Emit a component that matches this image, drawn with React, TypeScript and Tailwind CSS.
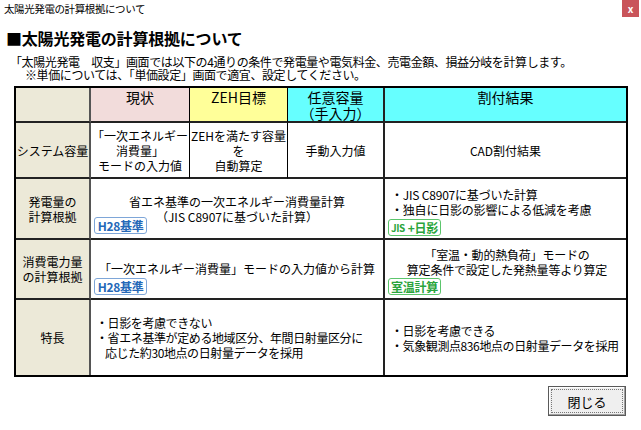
import React from "react";

const F = "font-['Noto_Sans_CJK_JP','Noto_Sans',sans-serif]";

function Badge({ children, color }: { children: React.ReactNode; color: "blue" | "green" }) {
  const cls =
    color === "blue"
      ? "text-[#2468b8] border-[#7ea6d8]"
      : "text-[#2aa43c] border-[#5cc56c]";
  return (
    <span
      className={`inline-flex items-center justify-center whitespace-nowrap h-[17px] w-[53px] rounded-[3px] border bg-white text-[12px] leading-[15px] font-bold tracking-[-0.3px] ${cls}`}
    >
      {children}
    </span>
  );
}

export default function App() {
  const beige = "bg-[#ece9d8]";
  return (
    <div className={`w-[641px] h-[430px] bg-white text-black overflow-hidden ${F}`}>
      {/* title bar */}
      <div className="h-[20px] flex justify-between">
        <div className="pl-[4px] pt-[2px] text-[10.5px] leading-[14px] tracking-[-0.4px]">
          太陽光発電の計算根拠について
        </div>
        <div className="w-[17px] h-[17px] mr-[2px] bg-[#c9545a] flex items-center justify-center text-white text-[10px] font-bold leading-none">
          x
        </div>
      </div>

      {/* heading */}
      <div className="mt-[8px] pl-[6px] text-[16px] leading-[20px] font-bold tracking-[-0.2px]">
        ■太陽光発電の計算根拠について
      </div>

      {/* description */}
      <div className="mt-[7px] pl-[10px] text-[12px] leading-[13px] tracking-[-0.4px]">
        <div>「太陽光発電　収支」画面では以下の4通りの条件で発電量や電気料金、売電金額、損益分岐を計算します。</div>
        <div className="pl-[15px]">※単価については、「単価設定」画面で適宜、設定してください。</div>
      </div>

      {/* table */}
      <div className="ml-[14px] mt-[5px] w-[614px] border-2 border-black">
        <div className="grid grid-cols-[75px_99px_98px_97px_241px] grid-rows-[35px_56px_61px_60px_75px] text-[12px] leading-[15px]">
          {/* header row */}
          <div className={`${beige} border-r-2 border-r-[#555] border-b-2 border-b-[#222]`} />
          <div className="bg-[#f2dcdb] border-r border-black border-b-2 border-b-[#222] text-center text-[14px] leading-[16px] pt-[1px]">
            現状
          </div>
          <div className="bg-[#ffff99] border-r border-black border-b-2 border-b-[#222] text-center text-[14px] leading-[16px] pt-[1px]">
            ZEH目標
          </div>
          <div className="bg-[#66ffff] border-r-2 border-r-[#222] border-b-2 border-b-[#222] text-center text-[14px] leading-[16px] pt-[1px]">
            <div>任意容量</div>
            <div>（手入力）</div>
          </div>
          <div className="bg-[#66ffff] border-b-2 border-b-[#222] text-center text-[14px] leading-[16px] pt-[1px]">
            割付結果
          </div>

          {/* system capacity row */}
          <div className={`${beige} border-r-2 border-r-[#555] border-b-2 border-b-[#222] flex items-center justify-center`}>
            システム容量
          </div>
          <div className="border-r border-black border-b-2 border-b-[#222] flex items-center justify-center text-center whitespace-nowrap">
            <div>
              <div>「一次エネルギー</div>
              <div>消費量」</div>
              <div>モードの入力値</div>
            </div>
          </div>
          <div className="border-r border-black border-b-2 border-b-[#222] flex items-center justify-center text-center whitespace-nowrap">
            <div>
              <div>ZEHを満たす容量</div>
              <div>を</div>
              <div>自動算定</div>
            </div>
          </div>
          <div className="border-r-2 border-r-[#222] border-b-2 border-b-[#222] flex items-center justify-center">
            手動入力値
          </div>
          <div className="border-b-2 border-b-[#222] flex items-center justify-center">CAD割付結果</div>

          {/* generation row */}
          <div className={`${beige} border-r-2 border-r-[#555] border-b-2 border-b-[#222] flex items-center justify-center text-center`}>
            <div>
              <div>発電量の</div>
              <div>計算根拠</div>
            </div>
          </div>
          <div className="col-span-3 relative border-r-2 border-r-[#222] border-b-2 border-b-[#222] text-center pt-[15px]">
            <div>省エネ基準の一次エネルギー消費量計算</div>
            <div>（JIS C8907に基づいた計算）</div>
            <div className="absolute left-[3px] bottom-[4px] flex">
              <Badge color="blue">H28基準</Badge>
            </div>
          </div>
          <div className="border-b-2 border-b-[#222] pt-[8px] pl-[3px] tracking-[-0.2px]">
            <div className="pl-[3px] whitespace-nowrap">・JIS C8907に基づいた計算</div>
            <div className="pl-[3px] whitespace-nowrap">・独自に日影の影響による低減を考慮</div>
            <div className="mt-[2px] flex">
              <Badge color="green">
                <span className="text-[10px] tracking-[-0.5px]">JIS</span>
                <span className="ml-[3px]">+日影</span>
              </Badge>
            </div>
          </div>

          {/* consumption row */}
          <div className={`${beige} border-r-2 border-r-[#555] border-b-2 border-b-[#222] flex items-center justify-center text-center`}>
            <div>
              <div>消費電力量</div>
              <div>の計算根拠</div>
            </div>
          </div>
          <div className="col-span-3 relative border-r-2 border-r-[#222] border-b-2 border-b-[#222] flex items-center justify-center pb-[1px]">
            <div>「一次エネルギー消費量」モードの入力値から計算</div>
            <div className="absolute left-[3px] bottom-[3px] flex">
              <Badge color="blue">H28基準</Badge>
            </div>
          </div>
          <div className="border-b-2 border-b-[#222] pt-[7px] pl-[3px] text-center tracking-[-0.2px]">
            <div className="whitespace-nowrap">「室温・動的熱負荷」モードの</div>
            <div className="whitespace-nowrap">算定条件で設定した発熱量等より算定</div>
            <div className="mt-[1px] flex">
              <Badge color="green">室温計算</Badge>
            </div>
          </div>

          {/* features row */}
          <div className={`${beige} border-r-2 border-r-[#555] flex items-center justify-center`}>特長</div>
          <div className="col-span-3 border-r-2 border-r-[#222] flex items-center pl-[5px]">
            <div className="whitespace-nowrap tracking-[-0.4px]">
              <div>・日影を考慮できない</div>
              <div>・省エネ基準が定める地域区分、年間日射量区分に</div>
              <div className="pl-[9px]">応じた約30地点の日射量データを採用</div>
            </div>
          </div>
          <div className="flex items-center pl-[6px]">
            <div className="whitespace-nowrap tracking-[-0.4px]">
              <div>・日影を考慮できる</div>
              <div>・気象観測点836地点の日射量データを採用</div>
            </div>
          </div>
        </div>
      </div>

      {/* close button */}
      <div className="mt-[9px] ml-[548px] w-[78px] h-[30px] border border-[#5a5a5a] bg-[#efefef] p-[2px] shadow-[inset_-1px_-1px_0_#a0a0a0,inset_1px_1px_0_#ffffff]">
        <div className="w-full h-full border border-dotted border-[#777] flex items-center justify-center text-[13px] leading-none">
          閉じる
        </div>
      </div>
    </div>
  );
}
